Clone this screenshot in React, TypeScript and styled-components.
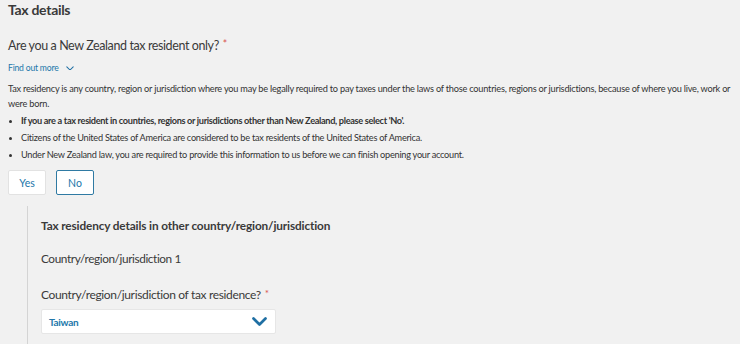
import React from "react";
import styled, { createGlobalStyle } from "styled-components";

const Global = createGlobalStyle`
  html, body { margin: 0; padding: 0; background: #f1f1f1; }
  body { font-family: Lato, "Noto Sans", sans-serif; color: #333; }
`;

const Page = styled.div`
  padding: 0 8px;
  display: flex;
  flex-direction: column;
`;

const Title = styled.h2`
  margin: 0;
  font-size: 14px;
  line-height: 20px;
  font-weight: 700;
  letter-spacing: -0.3px;
  color: #3a3a3a;
`;

const Question = styled.div`
  margin-top: 14px;
  font-size: 12.5px;
  letter-spacing: -0.4px;
  line-height: 20px;
  color: #3a3a3a;
`;

const Req = styled.span`
  color: #d9534f;
  font-size: 0.85em;
  margin-left: 4px;
  vertical-align: 2px;
`;

const FindOut = styled.a`
  margin-top: 2px;
  display: inline-flex;
  align-items: center;
  gap: 7px;
  font-size: 8.6px;
  letter-spacing: -0.2px;
  line-height: 20px;
  color: #2277aa;
  text-decoration: none;
  align-self: flex-start;
`;

const Para = styled.p`
  margin: 3px 0 0;
  font-size: 9.2px;
  letter-spacing: -0.22px;
  line-height: 15px;
  color: #333;
`;

const List = styled.ul`
  margin: 1px 0 0;
  padding-left: 13px;
  font-size: 9.2px;
  letter-spacing: -0.26px;
  line-height: 17px;
  color: #333;
  li::marker { font-size: 8px; }
`;

const Strong = styled.b`
  letter-spacing: -0.33px;
`;

const Buttons = styled.div`
  display: flex;
  gap: 10px;
  margin-top: 7px;
`;

const Choice = styled.button<{ $active?: boolean }>`
  width: 38px;
  height: 25px;
  box-sizing: border-box;
  background: #fff;
  border: ${(p) => (p.$active ? "1.5px solid #2f7aa3" : "1px solid #e2e2e2")};
  border-radius: 2px;
  color: #2277aa;
  font-family: inherit;
  font-size: 10.5px;
  padding: 0;
`;

const Nested = styled.div`
  margin: 11px 0 0 19px;
  border-left: 1px solid #d4d4d4;
  padding: 12px 0 20px 13px;
  display: flex;
  flex-direction: column;
`;

const SubHead = styled.div`
  font-size: 11.8px;
  font-weight: 700;
  letter-spacing: -0.13px;
  line-height: 16px;
  color: #3a3a3a;
`;

const Label = styled.div<{ $mt: number; $size: number; $ls: number }>`
  margin-top: ${(p) => p.$mt}px;
  font-size: ${(p) => p.$size}px;
  letter-spacing: ${(p) => p.$ls}px;
  line-height: 16px;
  color: #3a3a3a;
`;

const Select = styled.div`
  margin-top: 6px;
  width: 235px;
  height: 25px;
  box-sizing: border-box;
  background: #fff;
  border: 1px solid #e6e6e6;
  border-radius: 2px;
  display: flex;
  align-items: center;
  justify-content: space-between;
  padding: 0 8px 0 7px;
  color: #2277aa;
  font-size: 10px;
  letter-spacing: -0.3px;
  font-weight: 700;
`;

const Chevron = ({ size, stroke }: { size: number; stroke: number }) => (
  <svg width={size} height={size * 0.6} viewBox="0 0 10 6" fill="none">
    <path d="M1 1l4 4 4-4" stroke="#1f6fa3" strokeWidth={stroke} strokeLinecap="round" strokeLinejoin="round" />
  </svg>
);

export default function App() {
  return (
    <Page>
      <Global />
      <Title>Tax details</Title>
      <Question>
        Are you a New Zealand tax resident only?<Req>*</Req>
      </Question>
      <FindOut href="#">
        Find out more <Chevron size={8} stroke={1.3} />
      </FindOut>
      <Para>
        Tax residency is any country, region or jurisdiction where you may be legally required to pay taxes under
        the laws of those countries, regions or jurisdictions, because of where you live, work or were born.
      </Para>
      <List>
        <li>
          <Strong>If you are a tax resident in countries, regions or jurisdictions other than New Zealand, please select 'No'.</Strong>
        </li>
        <li>Citizens of the United States of America are considered to be tax residents of the United States of America.</li>
        <li>Under New Zealand law, you are required to provide this information to us before we can finish opening your account.</li>
      </List>
      <Buttons>
        <Choice>Yes</Choice>
        <Choice $active>No</Choice>
      </Buttons>
      <Nested>
        <SubHead>Tax residency details in other country/region/jurisdiction</SubHead>
        <Label $mt={17} $size={11.8} $ls={-0.4}>Country/region/jurisdiction 1</Label>
        <Label $mt={18} $size={12} $ls={-0.35}>
          Country/region/jurisdiction of tax residence?<Req>*</Req>
        </Label>
        <Select>
          Taiwan
          <Chevron size={15} stroke={1.8} />
        </Select>
      </Nested>
    </Page>
  );
}
